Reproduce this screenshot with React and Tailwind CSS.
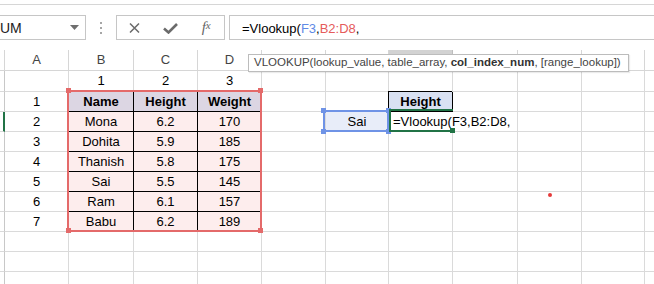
import clsx from 'clsx';

const CW = ['w-[5px]', 'w-[64px]', 'w-[65px]', 'w-[64px]', 'w-[64px]', 'w-[64px]', 'w-[63px]', 'w-[64px]', 'w-[65px]', 'w-[64px]', 'w-[63px]', 'w-[64px]'];
// letters from E onward sit under the function tooltip
const HEAD = ['', 'A', 'B', 'C', 'D', '', '', '', '', '', '', ''];

const people = [
  ['Mona', '6.2', '170'],
  ['Dohita', '5.9', '185'],
  ['Thanish', '5.8', '175'],
  ['Sai', '5.5', '145'],
  ['Ram', '6.1', '157'],
  ['Babu', '6.2', '189'],
];

function bodyCell(ri, c) {
  const cell = { text: '', cls: 'justify-center', rw: 'border-r', rc: 'border-r-[#dadada]', bc: 'border-b-[#dadada]' };
  if (c === 0) {
    cell.rc = 'border-r-[#c8c8c8]';
    if (ri === 2) {
      cell.rw = 'border-r-2';
      cell.rc = 'border-r-[#217346]';
    }
    return cell;
  }
  if (c === 1 && ri >= 1 && ri <= 7) cell.text = String(ri);
  if (ri === 0 && c >= 2 && c <= 4) cell.text = String(c - 1);
  if (ri >= 1 && ri <= 7 && c >= 2 && c <= 4) {
    cell.text = ri === 1 ? ['Name', 'Height', 'Weight'][c - 2] : people[ri - 2][c - 2];
    cell.cls += ri === 1 ? ' bg-[#dcd6e3] font-bold' : ' bg-[#fdeded]';
    if (c < 4) cell.rc = 'border-r-black';
    if (ri < 7) cell.bc = 'border-b-black';
  }
  if (ri === 1 && c === 7) {
    cell.text = 'Height';
    cell.cls += ' bg-[#d9e1f2] font-bold shadow-[-1px_-1px_0_#000]';
    cell.rc = 'border-r-black';
    cell.bc = 'border-b-black';
  }
  if (ri === 2 && c === 6) {
    cell.text = 'Sai';
    cell.cls += ' bg-[#e8edf9]';
  }
  if (ri === 2 && c === 7) {
    cell.text = '=Vlookup(F3,B2:D8,';
    cell.cls = 'justify-start pl-[4px] whitespace-nowrap overflow-visible';
    cell.rc = 'border-r-transparent';
  }
  return cell;
}

function FormulaBar() {
  return (
    <div className="h-[45px] flex items-start pt-[10px]">
      <div className="w-[86px] h-[25px] shrink-0 border border-l-0 border-[#c6c6c6] flex items-center pr-[6px]">
        <span className="flex-1 text-[14px] text-[#222] pt-[1px]">UM</span>
        <svg width="9" height="5" viewBox="0 0 9 5"><path d="M0 0h9L4.5 5z" fill="#6e6e6e" /></svg>
      </div>
      <div className="w-[30px] h-[25px] shrink-0 flex flex-col items-center justify-center gap-[3px]">
        <div className="w-[2px] h-[2px] bg-[#a6a6a6]" />
        <div className="w-[2px] h-[2px] bg-[#a6a6a6]" />
        <div className="w-[2px] h-[2px] bg-[#a6a6a6]" />
      </div>
      <div className="w-[109px] h-[25px] shrink-0 border border-[#c6c6c6] flex items-center">
        <span className="w-[36px] flex justify-center pt-[1px]">
          <svg width="11" height="10" viewBox="0 0 11 10"><path d="M1 0.5l9 9M10 0.5l-9 9" stroke="#6b6b6b" strokeWidth="1.5" /></svg>
        </span>
        <span className="w-[36px] flex justify-center pt-[1px]">
          <svg width="15" height="11" viewBox="0 0 15 11"><path d="M1 5.5l4.5 4L14 1" stroke="#6b6b6b" strokeWidth="2.6" fill="none" /></svg>
        </span>
        <span className="w-[36px] flex justify-center font-['Liberation_Serif',serif] italic text-[15px] text-[#666] leading-none">
          f<span className="text-[11px]">x</span>
        </span>
      </div>
      <div className="ml-[4px] flex-1 h-[25px] border border-r-0 border-[#c6c6c6] flex items-center text-[13px] text-black whitespace-nowrap">
        <span className="pl-[12px] pt-[2px]">
          =Vlookup(<span className="text-[#5f8ae6]">F3</span>,<span className="text-[#e55b5b]">B2:D8</span>,
        </span>
      </div>
    </div>
  );
}

function Sheet() {
  const rows = Array.from({ length: 11 }, (_, i) => i);
  return (
    <div className="flex flex-col">
      <div className="flex h-[21px]">
        {HEAD.map((h, i) => (
          <div
            key={i}
            className={clsx(
              CW[i],
              'shrink-0 h-full border-r border-b flex items-center justify-center text-[13px] text-[#444]',
              i === 7 ? 'bg-[#d2d2d2] border-r-[#bdbdbd] border-b-[#217346]' : 'border-r-[#d6d6d6] border-b-[#d6d6d6]'
            )}
          >
            {h}
          </div>
        ))}
      </div>
      {rows.map((ri) => (
        <div key={ri} className={clsx('flex', ri === 0 ? 'h-[21px]' : 'h-[20px]')}>
          {CW.map((w, c) => {
            const cell = bodyCell(ri, c);
            return (
              <div key={c} className={clsx(w, 'shrink-0 h-full border-b flex items-center text-[13px]', cell.rw, cell.rc, cell.bc, cell.cls)}>
                {cell.text}
              </div>
            );
          })}
        </div>
      ))}
    </div>
  );
}

export default function App() {
  return (
    <div className="relative w-[654px] h-[284px] overflow-hidden bg-white font-['Liberation_Sans',Arial,sans-serif] text-black">
      <div className="h-[5px] border-b border-[#d6d6d6]" />
      <FormulaBar />
      <Sheet />

      {/* table selection */}
      <div className="absolute left-[67px] top-[90px] w-[195px] h-[142px] border-2 border-[#e46a6a]" />
      <div className="absolute left-[66px] top-[88px] w-[5px] h-[5px] bg-[#e46a6a]" />
      <div className="absolute left-[258px] top-[88px] w-[5px] h-[5px] bg-[#e46a6a]" />
      <div className="absolute left-[66px] top-[228px] w-[5px] h-[5px] bg-[#e46a6a]" />
      <div className="absolute left-[258px] top-[228px] w-[5px] h-[5px] bg-[#e46a6a]" />

      {/* lookup value */}
      <div className="absolute left-[323px] top-[110px] w-[66px] h-[22px] border-2 border-[#6f93e6]" />
      <div className="absolute left-[321px] top-[108px] w-[5px] h-[5px] bg-[#6f93e6]" />
      <div className="absolute left-[386px] top-[108px] w-[5px] h-[5px] bg-[#6f93e6]" />
      <div className="absolute left-[321px] top-[129px] w-[5px] h-[5px] bg-[#6f93e6]" />
      <div className="absolute left-[386px] top-[129px] w-[5px] h-[5px] bg-[#6f93e6]" />

      {/* active cell */}
      <div className="absolute left-[389px] top-[109px] w-[64px] h-[23px] border-l-2 border-t-2 border-b-2 border-[#217346]" />
      <div className="absolute left-[450px] top-[128px] w-[5px] h-[5px] bg-[#217346]" />

      {/* function tooltip */}
      <div className="absolute left-[248px] top-[54px] w-[381px] h-[18px] border border-[#bcbcbc] bg-white pl-[5px] flex items-center whitespace-nowrap text-[11.5px] text-[#444] shadow-[1px_1px_1px_rgba(0,0,0,0.08)]">
        <span>
          VLOOKUP(lookup_value, table_array, <b className="text-[#333]">col_index_num</b>, [range_lookup])
        </span>
      </div>

      <div className="absolute left-[548px] top-[193px] w-[4px] h-[4px] rounded-full bg-[#e53a3a]" />
    </div>
  );
}
